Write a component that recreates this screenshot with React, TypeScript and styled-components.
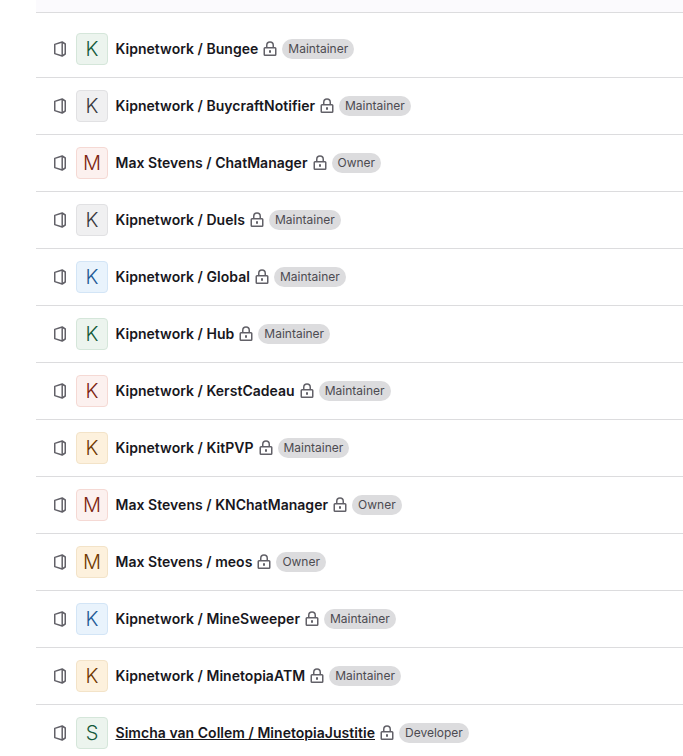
import React from "react"
import styled, { createGlobalStyle } from "styled-components"

const GlobalStyle = createGlobalStyle`
  html, body {
    margin: 0;
    padding: 0;
    height: 756px;
    overflow: hidden;
    background: #fff;
    font-family: Inter, "Noto Sans", sans-serif;
  }
`

const Page = styled.div`
  padding-left: 36px;
`

const TopBand = styled.div`
  height: 12px;
  background: #fbfafd;
  border-bottom: 1px solid #dcdcde;
  margin-bottom: 8px;
`

const List = styled.ul`
  list-style: none;
  margin: 0;
  padding: 0;
`

const Row = styled.li`
  display: flex;
  align-items: center;
  height: 56px;
  border-bottom: 1px solid #dcdcde;
  padding-left: 16px;
`

const FolderIcon = styled.svg`
  width: 16px;
  height: 16px;
  margin-right: 8px;
  flex: none;
  color: #626168;
`

const tones = {
  green: { bg: "#ecf4ee", border: "#d5e6da", fg: "#145a3a" },
  gray: { bg: "#f0f0f1", border: "#e1e1e3", fg: "#3a3a40" },
  red: { bg: "#fcf1ef", border: "#f5d9d4", fg: "#7d2410" },
  blue: { bg: "#e9f3fc", border: "#d3e5f6", fg: "#1f5a96" },
  orange: { bg: "#fdf1dd", border: "#f3e3c8", fg: "#703800" },
}

type Tone = keyof typeof tones

const Avatar = styled.div<{ $tone: Tone }>`
  width: 32px;
  height: 32px;
  box-sizing: border-box;
  flex: none;
  display: flex;
  align-items: center;
  justify-content: center;
  margin-right: 7.5px;
  border-radius: 4px;
  font-size: 20px;
  font-weight: 350;
  background: ${(props) => tones[props.$tone].bg};
  border: 1px solid ${(props) => tones[props.$tone].border};
  color: ${(props) => tones[props.$tone].fg};
`

const Title = styled.a<{ $hover?: boolean }>`
  font-size: 14px;
  font-weight: 600;
  line-height: 20px;
  letter-spacing: 0.03px;
  color: #18171d;
  text-decoration: ${(props) => (props.$hover ? "underline" : "none")};
  white-space: nowrap;
`

const LockIcon = styled.svg`
  width: 16px;
  height: 16px;
  margin-left: 4px;
  flex: none;
  color: #626168;
`

const RoleBadge = styled.span`
  margin-left: 4px;
  display: inline-flex;
  align-items: center;
  height: 20px;
  padding: 0 6px;
  border-radius: 10px;
  background: #dcdcde;
  color: #4c4b51;
  font-size: 12px;
  line-height: 16px;
  white-space: nowrap;
`

interface IProject {
  initial: string
  tone: Tone
  title: string
  role: string
  hover?: boolean
}

const projects: IProject[] = [
  { initial: "K", tone: "green", title: "Kipnetwork / Bungee", role: "Maintainer" },
  { initial: "K", tone: "gray", title: "Kipnetwork / BuycraftNotifier", role: "Maintainer" },
  { initial: "M", tone: "red", title: "Max Stevens / ChatManager", role: "Owner" },
  { initial: "K", tone: "gray", title: "Kipnetwork / Duels", role: "Maintainer" },
  { initial: "K", tone: "blue", title: "Kipnetwork / Global", role: "Maintainer" },
  { initial: "K", tone: "green", title: "Kipnetwork / Hub", role: "Maintainer" },
  { initial: "K", tone: "red", title: "Kipnetwork / KerstCadeau", role: "Maintainer" },
  { initial: "K", tone: "orange", title: "Kipnetwork / KitPVP", role: "Maintainer" },
  { initial: "M", tone: "red", title: "Max Stevens / KNChatManager", role: "Owner" },
  { initial: "M", tone: "orange", title: "Max Stevens / meos", role: "Owner" },
  { initial: "K", tone: "blue", title: "Kipnetwork / MineSweeper", role: "Maintainer" },
  { initial: "K", tone: "orange", title: "Kipnetwork / MinetopiaATM", role: "Maintainer" },
  { initial: "S", tone: "green", title: "Simcha van Collem / MinetopiaJustitie", role: "Developer", hover: true },
]

const App: React.FC = () => {
  return (
    <Page>
      <GlobalStyle />
      <TopBand />
      <List>
        {projects.map((project) => (
          <Row key={project.title}>
            <FolderIcon viewBox="0 0 16 16" fill="none" stroke="currentColor" strokeWidth="1.5" strokeLinejoin="round">
              <path d="M2.75 3.4 10.2 1 13.25 3v10l-3.05 2-7.45-2.4z" />
              <path d="M10.2 1v14" />
            </FolderIcon>
            <Avatar $tone={project.tone}>{project.initial}</Avatar>
            <Title $hover={project.hover}>{project.title}</Title>
            <LockIcon viewBox="0 0 16 16" fill="none" stroke="currentColor" strokeWidth="1.5">
              <rect x="2.25" y="6.75" width="11.5" height="7.5" rx="0.75" />
              <path d="M4.75 6.5V4.25a3.25 3.25 0 0 1 6.5 0V6.5" />
              <rect x="7" y="9.25" width="2" height="2.5" fill="currentColor" stroke="none" />
            </LockIcon>
            <RoleBadge>{project.role}</RoleBadge>
          </Row>
        ))}
      </List>
    </Page>
  )
}

export default App
